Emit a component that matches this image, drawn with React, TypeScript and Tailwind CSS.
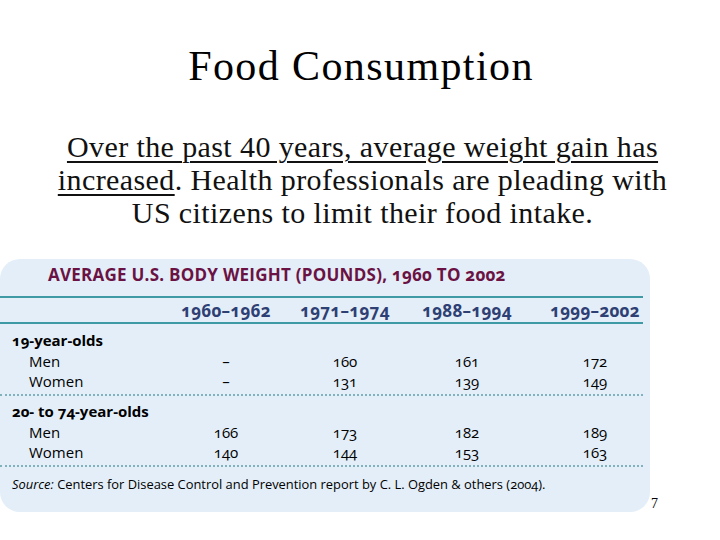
const groups = [
  {
    label: '19-year-olds',
    rows: [
      { name: 'Men', values: ['–', '160', '161', '172'] },
      { name: 'Women', values: ['–', '131', '139', '149'] },
    ],
  },
  {
    label: '20- to 74-year-olds',
    rows: [
      { name: 'Men', values: ['166', '173', '182', '189'] },
      { name: 'Women', values: ['140', '144', '153', '163'] },
    ],
  },
];

const years = ['1960–1962', '1971–1974', '1988–1994', '1999–2002'];

const gridCols = 'grid grid-cols-[166px_120px_118px_126px_120px]';

function WeightTable() {
  return (
    <div className="w-[650px] rounded-[20px] bg-[#e3eef8] pt-[6px] pb-[18px] font-['Open_Sans',sans-serif] oldstyle-nums">
      <div className="pl-12 text-[17px] leading-[20px] font-bold tracking-[0.25px] text-[#6b1244] mb-[11px]">
        AVERAGE U.S. BODY WEIGHT (POUNDS), 1960 TO 2002
      </div>
      <div className="mr-[7px] border-t-2 border-[#3e9ba6]" />
      <div className={`${gridCols} h-[24px] items-center text-[17px] font-bold tracking-[0.3px] text-[#2e3f74]`}>
        <div />
        {years.map((y, i) => (
          <div key={y} className={`text-center ${i === 3 ? 'pl-2.5' : ''}`}>
            {y}
          </div>
        ))}
      </div>
      <div className="mr-[7px] border-t-2 border-[#3e9ba6]" />

      {groups.map((g, gi) => (
        <div key={g.label}>
          <div className={`${gi === 0 ? 'pt-[6px]' : 'pt-[5px]'} pb-[4px]`}>
            <div className="pl-3 text-[15px] leading-[20px] font-bold text-black">{g.label}</div>
            {g.rows.map((r) => (
              <div key={r.name} className={`${gridCols} h-[20px] items-center text-[15px] font-medium text-black`}>
                <div className="pl-[29px]">{r.name}</div>
                {r.values.map((v, i) => (
                  <div key={i} className={`text-center ${i === 3 ? 'pl-2.5' : ''}`}>
                    {v}
                  </div>
                ))}
              </div>
            ))}
          </div>
          <div className="mr-[7px] border-t-2 border-dotted border-[#7fb2bd]" />
        </div>
      ))}

      <div className="pl-3 pt-[7px] text-[12.9px] leading-[20px] text-black">
        <span className="italic">Source:</span> Centers for Disease Control and Prevention report by C. L. Ogden &amp; others (2004).
      </div>
    </div>
  );
}

export default function App() {
  return (
    <div className="w-[720px] h-[540px] bg-white overflow-hidden font-['Liberation_Serif',serif] text-black">
      <h1 className="pt-[42px] pl-[2px] text-center text-[42px] leading-[48px] tracking-[1.4px]">Food Consumption</h1>
      <p className="mt-[40px] pl-[5px] text-center text-[30px] leading-[33px] tracking-[0.4px] text-[#111]">
        <span className="underline decoration-2 underline-offset-4">
          Over the past 40 years, average weight gain has
          <br />
          increased
        </span>
        . Health professionals are pleading with
        <br />
        US citizens to limit their food intake.
      </p>
      <div className="mt-[30px] flex items-end">
        <WeightTable />
        <div className="pl-[1px] pb-0 text-[14px] leading-[16px]">7</div>
      </div>
    </div>
  );
}
